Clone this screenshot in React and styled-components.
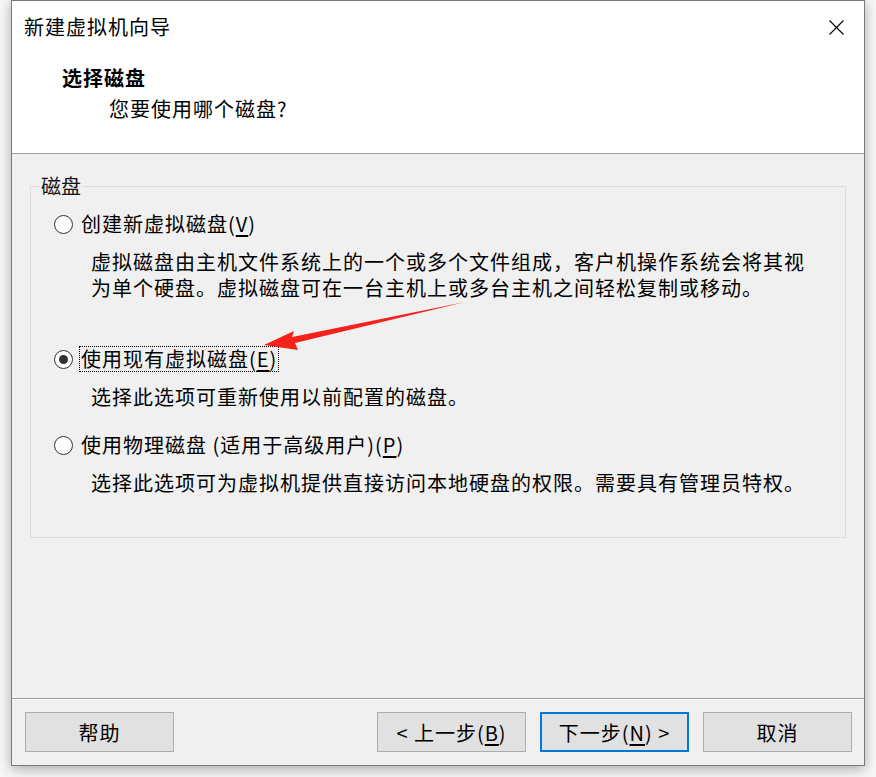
import React, { useState } from "react";
import styled, { createGlobalStyle } from "styled-components";

const GlobalStyle = createGlobalStyle`
  html, body {
    margin: 0;
    padding: 0;
    background: #f7f7f7;
    font-family: "Noto Sans CJK SC", "Liberation Sans", sans-serif;
    color: #000;
  }
`;

const Page = styled.div`
  width: 876px;
  height: 777px;
  overflow: hidden;
  padding-left: 11px;
  box-sizing: border-box;
`;

const Window = styled.div`
  position: relative;
  width: 854px;
  height: 766px;
  box-sizing: border-box;
  border: 1px solid #7a7a7a;
  background: #f0f0f0;
  display: flex;
  flex-direction: column;
  box-shadow: 0 3px 12px rgba(0, 0, 0, 0.32);
`;

const Header = styled.div`
  height: 153px;
  box-sizing: border-box;
  background: #fff;
  border-bottom: 1px solid #a0a0a0;
  padding: 12px 0 0 12px;
  font-size: 20px;
  letter-spacing: 1px;
`;

const TitleRow = styled.div`
  display: flex;
  align-items: center;
  justify-content: space-between;
  height: 28px;
  padding-right: 20px;
`;

const Title = styled.div`
  line-height: 28px;
`;

const CloseIcon = styled.svg`
  width: 15px;
  height: 15px;
`;

const Heading = styled.div`
  margin: 23px 0 0 38px;
  line-height: 28px;
  font-weight: bold;
`;

const SubHeading = styled.div`
  margin: 3px 0 0 85px;
  line-height: 28px;
`;

const Body = styled.div`
  flex: 1;
  padding: 21px 18px 0 18px;
`;

const Group = styled.fieldset`
  margin: 0;
  padding: 0 0 41px 9px;
  border: 1px solid #dcdcdc;
  min-width: 0;
`;

const Legend = styled.legend`
  padding: 0 1px;
  font-size: 20px;
  line-height: 22px;
  color: #111;
`;

const Options = styled.div`
  padding: 14px 0 0 14px;
  display: flex;
  flex-direction: column;
`;

const Option = styled.div`
  display: flex;
  flex-direction: column;
  margin-bottom: ${({ $after }) => $after}px;
`;

const RadioRow = styled.label`
  display: flex;
  align-items: center;
  height: 26px;
  font-size: 20px;
  letter-spacing: 1px;
`;

const RadioCircle = styled.span`
  width: 17px;
  height: 17px;
  border: 1px solid #333;
  border-radius: 50%;
  background: #fff;
  display: flex;
  align-items: center;
  justify-content: center;
  flex-shrink: 0;
  margin-right: 6px;

  &::after {
    content: "";
    width: 9px;
    height: 9px;
    border-radius: 50%;
    background: ${({ $checked }) => ($checked ? "#333" : "transparent")};
  }
`;

const RadioText = styled.span`
  line-height: 24px;
  padding: 0 1px;
  border: 1px dotted ${({ $focus }) => ($focus ? "#000" : "transparent")};
`;

const Key = styled.span`
  text-decoration: underline;
  text-underline-offset: 3px;
`;

const Desc = styled.div`
  margin: 12px 0 0 37px;
  font-size: 20px;
  line-height: 26px;
  letter-spacing: 1px;
  max-width: 722px;
`;

const Footer = styled.div`
  height: 67px;
  box-sizing: border-box;
  border-top: 1px solid #a0a0a0;
  box-shadow: inset 0 1px 0 #fff;
  padding: 13px 12px 0 13px;
  display: flex;
  gap: 14px;
`;

const Spacer = styled.div`
  flex: 1;
`;

const Button = styled.button`
  width: 149px;
  height: 40px;
  box-sizing: border-box;
  background: #e1e1e1;
  border: ${({ $primary }) =>
    $primary ? "2px solid #0078d7" : "1px solid #adadad"};
  font-family: "Noto Sans CJK SC", "Liberation Sans", sans-serif;
  font-size: 20px;
  letter-spacing: 1px;
  color: #000;
  padding: 0;
  display: flex;
  align-items: center;
  justify-content: center;
`;

const Arrow = styled.svg`
  position: absolute;
  left: 240px;
  top: 290px;
  width: 230px;
  height: 70px;
  pointer-events: none;
`;

const options = [
  {
    id: "new",
    label: "创建新虚拟磁盘",
    key: "V",
    desc: "虚拟磁盘由主机文件系统上的一个或多个文件组成，客户机操作系统会将其视为单个硬盘。虚拟磁盘可在一台主机上或多台主机之间轻松复制或移动。",
    after: 45,
  },
  {
    id: "existing",
    label: "使用现有虚拟磁盘",
    key: "E",
    desc: "选择此选项可重新使用以前配置的磁盘。",
    after: 22,
  },
  {
    id: "physical",
    label: "使用物理磁盘 (适用于高级用户)",
    key: "P",
    desc: "选择此选项可为虚拟机提供直接访问本地硬盘的权限。需要具有管理员特权。",
    after: 0,
  },
];

function App() {
  const [selected, setSelected] = useState("existing");

  return (
    <Page>
      <GlobalStyle />
      <Window>
        <Header>
          <TitleRow>
            <Title>新建虚拟机向导</Title>
            <CloseIcon viewBox="0 0 15 15">
              <path d="M0.5 0.5 L14.5 14.5 M14.5 0.5 L0.5 14.5" stroke="#000" strokeWidth="1.1" fill="none" />
            </CloseIcon>
          </TitleRow>
          <Heading>选择磁盘</Heading>
          <SubHeading>您要使用哪个磁盘?</SubHeading>
        </Header>

        <Body>
          <Group>
            <Legend>磁盘</Legend>
            <Options>
              {options.map((opt) => (
                <Option key={opt.id} $after={opt.after}>
                  <RadioRow onClick={() => setSelected(opt.id)}>
                    <RadioCircle $checked={selected === opt.id} />
                    <RadioText $focus={selected === opt.id}>
                      {opt.label}(<Key>{opt.key}</Key>)
                    </RadioText>
                  </RadioRow>
                  <Desc>{opt.desc}</Desc>
                </Option>
              ))}
            </Options>
          </Group>
        </Body>

        <Footer>
          <Button>帮助</Button>
          <Spacer />
          <Button>
            &lt; 上一步(<Key>B</Key>)
          </Button>
          <Button $primary>
            下一步(<Key>N</Key>) &gt;
          </Button>
          <Button>取消</Button>
        </Footer>

        <Arrow viewBox="0 0 230 70">
          <path d="M213 11 L40 46 L42 40 L12 54 L46 59 L43 52 Z" fill="#f5221b" />
        </Arrow>
      </Window>
    </Page>
  );
}

export default App;
